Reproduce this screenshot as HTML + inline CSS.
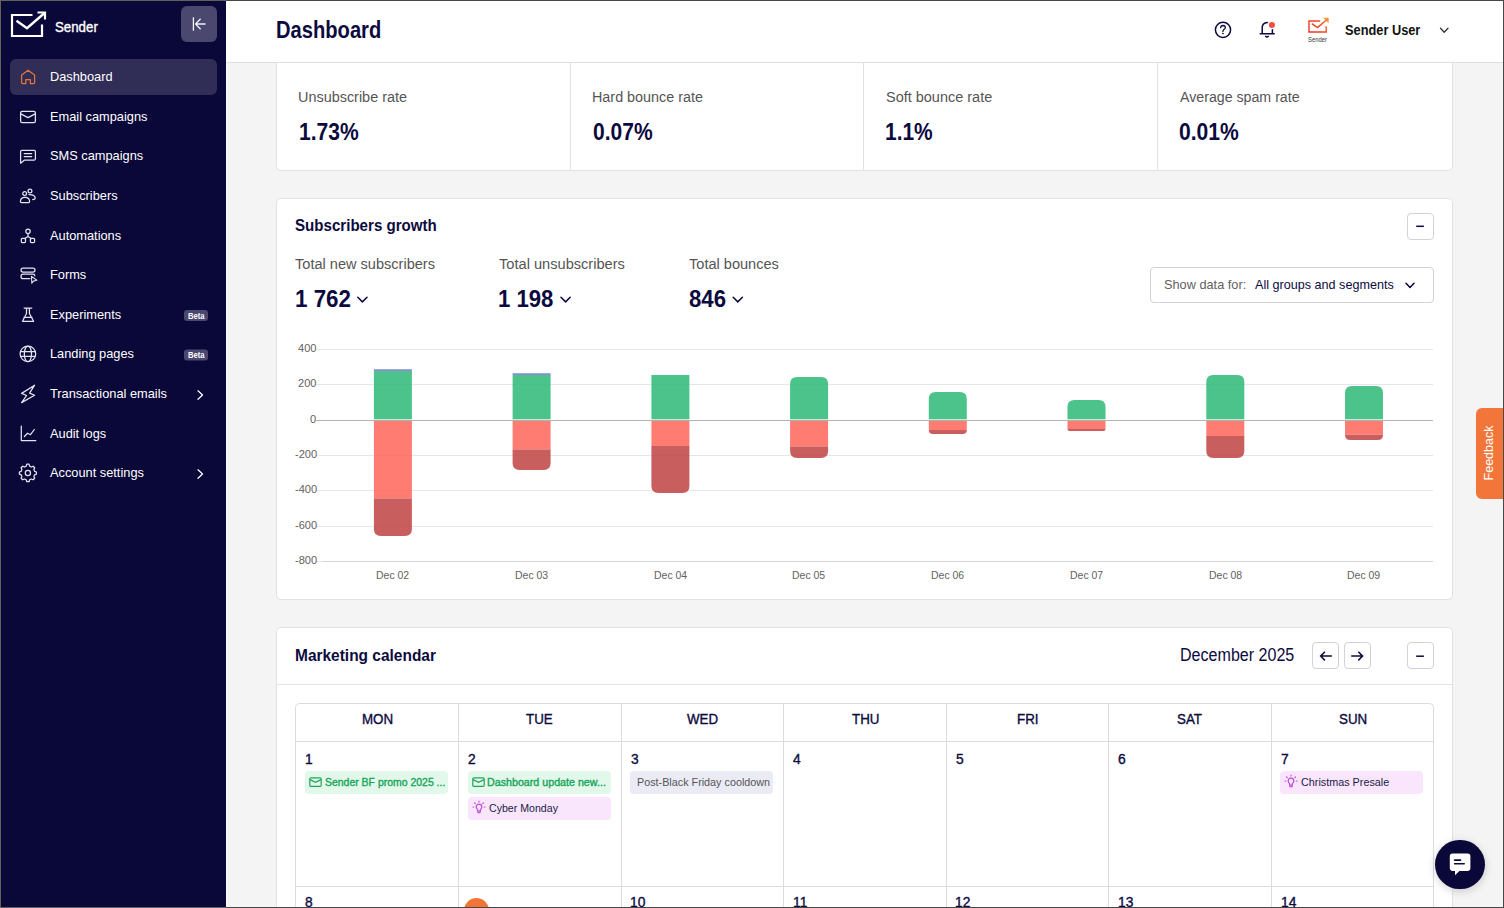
<!DOCTYPE html>
<html><head><meta charset="utf-8">
<style>
*{box-sizing:border-box;margin:0;padding:0}
html,body{width:1504px;height:908px;overflow:hidden;font-family:"Liberation Sans",sans-serif;background:#f4f4f4;position:relative}
.abs{position:absolute}
.t{position:absolute;white-space:nowrap;transform-origin:0 0}
.box{position:absolute;background:#fff;border:1px solid #e2e2e2}
.btn{position:absolute;border:1px solid #d3d3d3;border-radius:4px;background:#fff}
</style></head><body>

<div class="abs" style="left:0;top:0;width:226px;height:908px;background:#0a0838"></div>
<div class="abs" style="left:226px;top:62px;width:1px;height:846px;background:#fafafa"></div>
<svg class="abs" style="left:0;top:0" width="226" height="500" viewBox="0 0 226 500" fill="none" stroke="#fff">
    <path d="M32.5 15H12V36H42V24.5" stroke-width="2.2"/>
    <path d="M16.5 20.8L27 28.2L44.5 13" stroke-width="2.4"/>
    <path d="M37.5 12.5H45V19.5" stroke-width="2.2"/>
    <rect x="181" y="6" width="36" height="36" rx="6" fill="#4a486e" stroke="none"/>
    <path d="M193.4 17.3V30.8M195.6 24H205.5M200.6 18.8L195.6 24L200.6 29.2" stroke-width="1.3" stroke="#f2f2f7"/>
    <rect x="10" y="59" width="207" height="36" rx="6" fill="#302d57" stroke="none"/>
    <g stroke-width="1.25" stroke-linejoin="round" stroke-linecap="round" stroke="#e4e3ee">
    <path d="M21.6 75V82.4Q21.6 83.5 22.7 83.5H25.8V79.5H30.4V83.5H33.5Q34.6 83.5 34.6 82.4V75L28.1 70.3Z" stroke="#e8733a"/>
    <rect x="20.6" y="111.3" width="14.8" height="11.4" rx="1.6"/>
    <path d="M20.8 113.9L28 117.6L35.2 113.9"/>
    <path d="M20.6 163.2V151.6Q20.6 150.4 21.8 150.4H34.3Q35.4 150.4 35.4 151.6V158.8Q35.4 160 34.3 160H24.6Z"/>
    <path d="M24.2 153.6H31.7M24.2 156.5H31.7"/>
    <circle cx="24.7" cy="193.6" r="1.9"/>
    <path d="M20.4 201.5Q20.4 197.3 25 197.3Q29.6 197.3 29.6 201.5Q29.6 202.5 28.6 202.5H21.4Q20.4 202.5 20.4 201.5Z"/>
    <circle cx="30" cy="190.9" r="1.9"/>
    <path d="M29 194.6Q34.8 194.4 35.2 198Q35.2 199.5 32.6 199.5"/>
    <circle cx="28" cy="231.3" r="2.2"/>
    <path d="M28 233.5V236.4L24.8 238.6M28 236.4L31.2 238.6"/>
    <rect x="21.3" y="238.4" width="4.2" height="4.2" rx="1"/>
    <rect x="30.4" y="238.4" width="4.2" height="4.2" rx="1"/>
    <rect x="21" y="268" width="14" height="4.1" rx="2"/>
    <path d="M34.8 275.8Q34.8 274 33 274H23Q21 274 21 276.4Q21 278.7 23 278.7H29.8"/>
    <path d="M31.5 276.4L31.8 283.3L33.4 281.1L36.9 280.2Z" stroke-width="1.1"/>
    <path d="M24.1 308H31.8M26.5 308V313.5L22.5 321.3H33.6L29.4 313.5V308M23.9 317.3H32.1"/>
    <circle cx="27.9" cy="353.9" r="7.8"/>
    <ellipse cx="27.9" cy="353.9" rx="3.6" ry="7.8"/>
    <path d="M20.6 351.5H35.2M20.6 356.3H35.2"/>
    <path d="M34.6 385.2L21.6 393.4L26.6 395.5L21.6 402.6L34.6 395.3L29.6 393.1Z"/>
    <path d="M21.3 426V440.5H35.8M24.4 436.5L27.5 433.2L30.5 434.7L34.3 429.5"/>
    <path d="M26.8 465.2H29L29.6 467.1L31.3 468L33.1 467.2L34.7 468.8L33.9 470.6L34.6 472.3L36.4 473V475.2L34.6 475.8L33.9 477.5L34.7 479.2L33.1 480.8L31.3 480L29.6 480.8L29 482.7H26.8L26.2 480.8L24.5 480L22.7 480.8L21.1 479.2L21.9 477.5L21.2 475.8L19.4 475.2V473L21.2 472.3L21.9 470.6L21.1 468.8L22.7 467.2L24.5 468L26.2 467.1Z" transform="translate(0,-1)"/>
    <circle cx="27.9" cy="473" r="2.6"/>
    <path d="M198 390.8L202.5 395L198 399.3M198 469.8L202.5 474L198 478.3" stroke="#fff"/>
    </g>
    <rect x="184" y="310" width="24" height="11" rx="3" fill="#4a4870" stroke="none"/>
    <rect x="184" y="349.5" width="24" height="11" rx="3" fill="#4a4870" stroke="none"/>
</svg>
<div class="t" style="left:54.70px;top:21.00px;font-size:13.8px;line-height:13.8px;color:#fff;transform:scaleX(0.962);-webkit-text-stroke:0.35px #fff;">Sender</div>
<div class="t" style="left:50px;top:71.16px;font-size:12.8px;line-height:12.8px;color:#fff">Dashboard</div>
<div class="t" style="left:50px;top:110.76px;font-size:12.8px;line-height:12.8px;color:#fff">Email campaigns</div>
<div class="t" style="left:50px;top:150.36px;font-size:12.8px;line-height:12.8px;color:#fff">SMS campaigns</div>
<div class="t" style="left:50px;top:189.96px;font-size:12.8px;line-height:12.8px;color:#fff">Subscribers</div>
<div class="t" style="left:50px;top:229.56px;font-size:12.8px;line-height:12.8px;color:#fff">Automations</div>
<div class="t" style="left:50px;top:269.16px;font-size:12.8px;line-height:12.8px;color:#fff">Forms</div>
<div class="t" style="left:50px;top:308.76px;font-size:12.8px;line-height:12.8px;color:#fff">Experiments</div>
<div class="t" style="left:50px;top:348.36px;font-size:12.8px;line-height:12.8px;color:#fff">Landing pages</div>
<div class="t" style="left:50px;top:387.96px;font-size:12.8px;line-height:12.8px;color:#fff">Transactional emails</div>
<div class="t" style="left:50px;top:427.56px;font-size:12.8px;line-height:12.8px;color:#fff">Audit logs</div>
<div class="t" style="left:50px;top:467.16px;font-size:12.8px;line-height:12.8px;color:#fff">Account settings</div>
<div class="t" style="left:187.78px;top:313.00px;font-size:8.2px;line-height:8.2px;font-weight:bold;color:#fff;transform:scaleX(0.932);">Beta</div>
<div class="t" style="left:187.78px;top:352.00px;font-size:8.2px;line-height:8.2px;font-weight:bold;color:#fff;transform:scaleX(0.932);">Beta</div>
<div class="box" style="left:276px;top:40px;width:1177px;height:131px;border-radius:0 0 5px 5px"></div>
<div class="abs" style="left:570px;top:62px;width:1px;height:108px;background:#e2e2e2"></div>
<div class="abs" style="left:863px;top:62px;width:1px;height:108px;background:#e2e2e2"></div>
<div class="abs" style="left:1157px;top:62px;width:1px;height:108px;background:#e2e2e2"></div>
<div class="box" style="left:276px;top:198px;width:1177px;height:402px;border-radius:5px"></div>
<div class="box" style="left:276px;top:627px;width:1177px;height:400px;border-radius:5px"></div>
<div class="t" style="left:298.38px;top:90.00px;font-size:14.0px;line-height:14.0px;color:#555;transform:scaleX(1.030);">Unsubscribe rate</div>
<div class="t" style="left:298.99px;top:121.00px;font-size:23.0px;line-height:23.0px;font-weight:bold;color:#0c0a3e;transform:scaleX(0.915);">1.73%</div>
<div class="t" style="left:591.81px;top:90.00px;font-size:14.0px;line-height:14.0px;color:#555;transform:scaleX(1.026);">Hard bounce rate</div>
<div class="t" style="left:592.66px;top:121.00px;font-size:23.0px;line-height:23.0px;font-weight:bold;color:#0c0a3e;transform:scaleX(0.914);">0.07%</div>
<div class="t" style="left:885.65px;top:90.00px;font-size:14.0px;line-height:14.0px;color:#555;transform:scaleX(1.034);">Soft bounce rate</div>
<div class="t" style="left:885.49px;top:121.00px;font-size:23.0px;line-height:23.0px;font-weight:bold;color:#0c0a3e;transform:scaleX(0.909);">1.1%</div>
<div class="t" style="left:1179.76px;top:90.00px;font-size:14.0px;line-height:14.0px;color:#555;transform:scaleX(1.013);">Average spam rate</div>
<div class="t" style="left:1179.46px;top:121.00px;font-size:23.0px;line-height:23.0px;font-weight:bold;color:#0c0a3e;transform:scaleX(0.917);">0.01%</div>
<div class="t" style="left:295.35px;top:218.00px;font-size:15.8px;line-height:15.8px;font-weight:bold;color:#0c0a3e;transform:scaleX(0.956);">Subscribers growth</div>
<div class="btn" style="left:1407px;top:213px;width:27px;height:27px"></div>
<div class="t" style="left:295.47px;top:257.00px;font-size:14.0px;line-height:14.0px;color:#555;transform:scaleX(1.040);">Total new subscribers</div>
<div class="t" style="left:498.97px;top:257.00px;font-size:14.0px;line-height:14.0px;color:#555;transform:scaleX(1.044);">Total unsubscribers</div>
<div class="t" style="left:688.67px;top:257.00px;font-size:14.0px;line-height:14.0px;color:#555;transform:scaleX(1.040);">Total bounces</div>
<div class="t" style="left:295.10px;top:288.00px;font-size:23.0px;line-height:23.0px;font-weight:bold;color:#0c0a3e;transform:scaleX(0.973);">1 762</div>
<div class="t" style="left:498.12px;top:288.00px;font-size:23.0px;line-height:23.0px;font-weight:bold;color:#0c0a3e;transform:scaleX(0.963);">1 198</div>
<div class="t" style="left:688.78px;top:288.00px;font-size:23.0px;line-height:23.0px;font-weight:bold;color:#0c0a3e;transform:scaleX(0.965);">846</div>
<div class="btn" style="left:1150px;top:267px;width:284px;height:36px"></div>
<div class="t" style="left:1164.13px;top:280.00px;font-size:11.9px;line-height:11.9px;color:#5f5f5f;transform:scaleX(1.072);">Show data for:</div>
<div class="t" style="left:1255.17px;top:280.00px;font-size:11.9px;line-height:11.9px;color:#0c0a3e;transform:scaleX(1.060);">All groups and segments</div>
<svg class="abs" style="left:0;top:0" width="1504" height="400" fill="none" stroke="#0c0a3e" stroke-width="1.5" stroke-linecap="round" stroke-linejoin="round">
  <path d="M357.8 297.3L362.4 301.9L367 297.3M561 297.3L565.6 301.9L570.2 297.3M733.2 297.3L737.8 301.9L742.4 297.3M1406 283.2L1410 287.4L1414 283.2"/>
  <path d="M1416.2 226.3H1423.9" stroke-linecap="butt"/>
</svg>
<svg class="abs" style="left:0;top:0" width="1504" height="908" viewBox="0 0 1504 908">
<rect x="316" y="349" width="1117" height="1" fill="#e6e6e6"/>
<rect x="316" y="384" width="1117" height="1" fill="#e6e6e6"/>
<rect x="316" y="455" width="1117" height="1" fill="#e6e6e6"/>
<rect x="316" y="490" width="1117" height="1" fill="#e6e6e6"/>
<rect x="316" y="526" width="1117" height="1" fill="#e6e6e6"/>
<rect x="316" y="561" width="1117" height="1" fill="#e6e6e6"/>
<rect x="323" y="561" width="1110" height="1" fill="#d4d4d4"/>
<rect x="373.9" y="371" width="38" height="48" fill="#2cb875" fill-opacity="0.85"/>
<rect x="373.9" y="419" width="38" height="1" fill="#2cb875" fill-opacity="0.3"/>
<rect x="373.9" y="369.2" width="38" height="1.8" fill="#8a8ed6"/>
<rect x="373.9" y="421" width="38" height="77.5" fill="#ff655b" fill-opacity="0.85"/>
<path d="M373.9 498.5V529Q373.9 536 380.9 536H404.9Q411.9 536 411.9 529V498.5Z" fill="#bf4242" fill-opacity="0.85"/>
<rect x="512.6" y="375" width="38" height="44" fill="#2cb875" fill-opacity="0.85"/>
<rect x="512.6" y="419" width="38" height="1" fill="#2cb875" fill-opacity="0.3"/>
<rect x="512.6" y="373.2" width="38" height="1.8" fill="#8a8ed6"/>
<rect x="512.6" y="421" width="38" height="28.5" fill="#ff655b" fill-opacity="0.85"/>
<path d="M512.6 449.5V463Q512.6 470 519.6 470H543.6Q550.6 470 550.6 463V449.5Z" fill="#bf4242" fill-opacity="0.85"/>
<rect x="651.4" y="375" width="38" height="44" fill="#2cb875" fill-opacity="0.85"/>
<rect x="651.4" y="419" width="38" height="1" fill="#2cb875" fill-opacity="0.3"/>
<rect x="651.4" y="421" width="38" height="25" fill="#ff655b" fill-opacity="0.85"/>
<path d="M651.4 446V486Q651.4 493 658.4 493H682.4Q689.4 493 689.4 486V446Z" fill="#bf4242" fill-opacity="0.85"/>
<path d="M790.1 419V384Q790.1 377 797.1 377H821.1Q828.1 377 828.1 384V419Z" fill="#2cb875" fill-opacity="0.85"/>
<rect x="790.1" y="419" width="38" height="1" fill="#2cb875" fill-opacity="0.3"/>
<rect x="790.1" y="421" width="38" height="25.5" fill="#ff655b" fill-opacity="0.85"/>
<path d="M790.1 446.5V451Q790.1 458 797.1 458H821.1Q828.1 458 828.1 451V446.5Z" fill="#bf4242" fill-opacity="0.85"/>
<path d="M928.8 419V399Q928.8 392 935.8 392H959.8Q966.8 392 966.8 399V419Z" fill="#2cb875" fill-opacity="0.85"/>
<rect x="928.8" y="419" width="38" height="1" fill="#2cb875" fill-opacity="0.3"/>
<rect x="928.8" y="421" width="38" height="9" fill="#ff655b" fill-opacity="0.85"/>
<path d="M928.8 430V430Q928.8 434 932.8 434H962.8Q966.8 434 966.8 430V430Z" fill="#bf4242" fill-opacity="0.85"/>
<path d="M1067.5 419V407Q1067.5 400 1074.5 400H1098.5Q1105.5 400 1105.5 407V419Z" fill="#2cb875" fill-opacity="0.85"/>
<rect x="1067.5" y="419" width="38" height="1" fill="#2cb875" fill-opacity="0.3"/>
<rect x="1067.5" y="421" width="38" height="8" fill="#ff655b" fill-opacity="0.85"/>
<path d="M1067.5 429V429Q1067.5 431 1069.5 431H1103.5Q1105.5 431 1105.5 429V429Z" fill="#bf4242" fill-opacity="0.85"/>
<path d="M1206.3 419V382Q1206.3 375 1213.3 375H1237.3Q1244.3 375 1244.3 382V419Z" fill="#2cb875" fill-opacity="0.85"/>
<rect x="1206.3" y="419" width="38" height="1" fill="#2cb875" fill-opacity="0.3"/>
<rect x="1206.3" y="421" width="38" height="15" fill="#ff655b" fill-opacity="0.85"/>
<path d="M1206.3 436V451Q1206.3 458 1213.3 458H1237.3Q1244.3 458 1244.3 451V436Z" fill="#bf4242" fill-opacity="0.85"/>
<path d="M1345.0 419V393Q1345.0 386 1352.0 386H1376.0Q1383.0 386 1383.0 393V419Z" fill="#2cb875" fill-opacity="0.85"/>
<rect x="1345.0" y="419" width="38" height="1" fill="#2cb875" fill-opacity="0.3"/>
<rect x="1345.0" y="421" width="38" height="13.699999999999989" fill="#ff655b" fill-opacity="0.85"/>
<path d="M1345.0 434.7V434.7Q1345.0 440 1350.3 440H1377.7Q1383.0 440 1383.0 434.7V434.7Z" fill="#bf4242" fill-opacity="0.85"/>
<rect x="316" y="420" width="1117" height="1" fill="#b2b2b2"/>
</svg>
<div class="t" style="left:298.19px;top:343.00px;font-size:10.5px;line-height:10.5px;color:#616161;transform:scaleX(1.052);">400</div>
<div class="t" style="left:298.19px;top:378.00px;font-size:10.5px;line-height:10.5px;color:#616161;transform:scaleX(1.052);">200</div>
<div class="t" style="left:310.48px;top:414.00px;font-size:10.5px;line-height:10.5px;color:#616161;transform:scaleX(1.052);">0</div>
<div class="t" style="left:294.52px;top:449.00px;font-size:10.5px;line-height:10.5px;color:#616161;transform:scaleX(1.052);">-200</div>
<div class="t" style="left:294.52px;top:484.00px;font-size:10.5px;line-height:10.5px;color:#616161;transform:scaleX(1.052);">-400</div>
<div class="t" style="left:294.52px;top:520.00px;font-size:10.5px;line-height:10.5px;color:#616161;transform:scaleX(1.052);">-600</div>
<div class="t" style="left:294.52px;top:555.00px;font-size:10.5px;line-height:10.5px;color:#616161;transform:scaleX(1.052);">-800</div>
<div class="t" style="left:376.16px;top:571.00px;font-size:10.0px;line-height:10.0px;color:#616161;transform:scaleX(1.047);">Dec 02</div>
<div class="t" style="left:514.85px;top:571.00px;font-size:10.0px;line-height:10.0px;color:#616161;transform:scaleX(1.047);">Dec 03</div>
<div class="t" style="left:653.50px;top:571.00px;font-size:10.0px;line-height:10.0px;color:#616161;transform:scaleX(1.047);">Dec 04</div>
<div class="t" style="left:792.29px;top:571.00px;font-size:10.0px;line-height:10.0px;color:#616161;transform:scaleX(1.047);">Dec 05</div>
<div class="t" style="left:931.04px;top:571.00px;font-size:10.0px;line-height:10.0px;color:#616161;transform:scaleX(1.047);">Dec 06</div>
<div class="t" style="left:1069.81px;top:571.00px;font-size:10.0px;line-height:10.0px;color:#616161;transform:scaleX(1.047);">Dec 07</div>
<div class="t" style="left:1208.50px;top:571.00px;font-size:10.0px;line-height:10.0px;color:#616161;transform:scaleX(1.047);">Dec 08</div>
<div class="t" style="left:1347.24px;top:571.00px;font-size:10.0px;line-height:10.0px;color:#616161;transform:scaleX(1.047);">Dec 09</div>
<div class="abs" style="left:226px;top:0;width:1278px;height:62px;background:#fff"></div>
<div class="abs" style="left:226px;top:62px;width:1278px;height:1px;background:#e0e0e0"></div>
<div class="t" style="left:276.24px;top:19.00px;font-size:23.0px;line-height:23.0px;font-weight:bold;color:#0c0a3e;transform:scaleX(0.876);">Dashboard</div>
<svg class="abs" style="left:1200px;top:0" width="304" height="62" viewBox="1200 0 304 62" fill="none" stroke="#0c0a3e" stroke-width="1.5" stroke-linecap="round" stroke-linejoin="round">
    <circle cx="1223" cy="29.8" r="7.6"/>
    <path d="M1220.7 27.6Q1220.8 25.5 1223.1 25.5Q1225.3 25.6 1225.3 27.5Q1225.3 28.9 1223.7 29.7Q1222.9 30.3 1222.9 31.5" stroke-width="1.3"/>
    <circle cx="1222.9" cy="33.5" r="0.85" fill="#0c0a3e" stroke="none"/>
    <path d="M1262.2 33.4V27.6Q1262.2 22.8 1267.4 22.4M1272.4 28.6V33.4M1260.3 33.8H1274.2M1265.7 36.4Q1267 37.5 1268.3 36.4"/>
    <circle cx="1271.9" cy="25" r="3.7" fill="#fb4a3e" stroke="#fff" stroke-width="1.3"/>
    <defs><linearGradient id="lg" x1="1308" y1="33" x2="1328" y2="18" gradientUnits="userSpaceOnUse"><stop offset="0" stop-color="#ee2e24"/><stop offset="0.6" stop-color="#f04a28"/><stop offset="1" stop-color="#f78a2a"/></linearGradient></defs>
    <g stroke="url(#lg)" stroke-width="1.4" stroke-linecap="butt" stroke-linejoin="miter">
      <path d="M1320.2 21H1309V32H1326.2V26.3"/>
      <path d="M1311.8 23.7L1317.5 27.6L1326.8 19.6"/>
    </g>
    <path d="M1324.3 18.2H1328.2V22.1Z" fill="#f78a2a" stroke="#f78a2a" stroke-width="0.8"/>
    <path d="M1440.5 28.2L1444.2 32.2L1448 28.2" stroke="#333" stroke-width="1.3"/>
</svg>
<div class="t" style="left:1307.74px;top:37.00px;font-size:6.3px;line-height:6.3px;color:#333;transform:scaleX(0.928);">Sender</div>
<div class="t" style="left:1344.82px;top:24.00px;font-size:13.8px;line-height:13.8px;font-weight:bold;color:#111;transform:scaleX(0.927);">Sender User</div>
<div class="t" style="left:295.16px;top:648.00px;font-size:15.7px;line-height:15.7px;font-weight:bold;color:#0c0a3e;transform:scaleX(0.986);">Marketing calendar</div>
<div class="t" style="left:1179.88px;top:647.00px;font-size:17.5px;line-height:17.5px;color:#0c0a3e;transform:scaleX(0.918);">December 2025</div>
<div class="abs" style="left:277px;top:684px;width:1175px;height:1px;background:#e2e2e2"></div>
<div class="btn" style="left:1312px;top:642px;width:27px;height:27px"></div>
<div class="btn" style="left:1344px;top:642px;width:27px;height:27px"></div>
<div class="btn" style="left:1407px;top:642px;width:27px;height:27px"></div>
<svg class="abs" style="left:0;top:0" width="1504" height="908" fill="none" stroke="#0c0a3e" stroke-width="1.5" stroke-linecap="round" stroke-linejoin="round">
<path d="M1320.6 656.1H1331.8M1324.9 651.8L1320.6 656.1L1324.9 660.4" stroke-linecap="butt" stroke-linejoin="miter"/>
<path d="M1362.6 656.1H1351.2M1358.3 651.8L1362.6 656.1L1358.3 660.4" stroke-linecap="butt" stroke-linejoin="miter"/>
<path d="M1416.2 656.2H1423.9" stroke-linecap="butt"/>
<rect x="295.5" y="703.5" width="1138" height="240" rx="4" stroke="#dcdcdc" stroke-width="1"/>
<path d="M295.5 741.5H1433.5M295.5 886.5H1433.5" stroke="#dcdcdc" stroke-width="1"/>
<path d="M458.5 703.5V908" stroke="#dcdcdc" stroke-width="1"/>
<path d="M621.5 703.5V908" stroke="#dcdcdc" stroke-width="1"/>
<path d="M783.5 703.5V908" stroke="#dcdcdc" stroke-width="1"/>
<path d="M946.5 703.5V908" stroke="#dcdcdc" stroke-width="1"/>
<path d="M1108.5 703.5V908" stroke="#dcdcdc" stroke-width="1"/>
<path d="M1271.5 703.5V908" stroke="#dcdcdc" stroke-width="1"/>
</svg>
<div class="t" style="left:361.53px;top:713.00px;font-size:13.8px;line-height:13.8px;color:#0c0a3e;transform:scaleX(0.967);-webkit-text-stroke:0.35px #0c0a3e;">MON</div>
<div class="t" style="left:526.48px;top:713.00px;font-size:13.8px;line-height:13.8px;color:#0c0a3e;transform:scaleX(0.967);-webkit-text-stroke:0.35px #0c0a3e;">TUE</div>
<div class="t" style="left:687.00px;top:713.00px;font-size:13.8px;line-height:13.8px;color:#0c0a3e;transform:scaleX(0.967);-webkit-text-stroke:0.35px #0c0a3e;">WED</div>
<div class="t" style="left:851.52px;top:713.00px;font-size:13.8px;line-height:13.8px;color:#0c0a3e;transform:scaleX(0.967);-webkit-text-stroke:0.35px #0c0a3e;">THU</div>
<div class="t" style="left:1016.78px;top:713.00px;font-size:13.8px;line-height:13.8px;color:#0c0a3e;transform:scaleX(0.967);-webkit-text-stroke:0.35px #0c0a3e;">FRI</div>
<div class="t" style="left:1177.42px;top:713.00px;font-size:13.8px;line-height:13.8px;color:#0c0a3e;transform:scaleX(0.967);-webkit-text-stroke:0.35px #0c0a3e;">SAT</div>
<div class="t" style="left:1338.79px;top:713.00px;font-size:13.8px;line-height:13.8px;color:#0c0a3e;transform:scaleX(0.967);-webkit-text-stroke:0.35px #0c0a3e;">SUN</div>
<div class="t" style="left:304.96px;top:753.00px;font-size:13.8px;line-height:13.8px;color:#0c0a3e;transform:scaleX(1.001);-webkit-text-stroke:0.35px #0c0a3e;">1</div>
<div class="t" style="left:305.41px;top:896.00px;font-size:13.8px;line-height:13.8px;color:#0c0a3e;transform:scaleX(1.001);-webkit-text-stroke:0.35px #0c0a3e;">8</div>
<div class="t" style="left:467.90px;top:753.00px;font-size:13.8px;line-height:13.8px;color:#0c0a3e;transform:scaleX(1.001);-webkit-text-stroke:0.35px #0c0a3e;">2</div>
<div class="t" style="left:630.66px;top:753.00px;font-size:13.8px;line-height:13.8px;color:#0c0a3e;transform:scaleX(1.001);-webkit-text-stroke:0.35px #0c0a3e;">3</div>
<div class="t" style="left:630.14px;top:896.00px;font-size:13.8px;line-height:13.8px;color:#0c0a3e;transform:scaleX(1.001);-webkit-text-stroke:0.35px #0c0a3e;">10</div>
<div class="t" style="left:793.46px;top:753.00px;font-size:13.8px;line-height:13.8px;color:#0c0a3e;transform:scaleX(1.001);-webkit-text-stroke:0.35px #0c0a3e;">4</div>
<div class="t" style="left:792.73px;top:896.00px;font-size:13.8px;line-height:13.8px;color:#0c0a3e;transform:scaleX(1.001);-webkit-text-stroke:0.35px #0c0a3e;">11</div>
<div class="t" style="left:955.81px;top:753.00px;font-size:13.8px;line-height:13.8px;color:#0c0a3e;transform:scaleX(1.001);-webkit-text-stroke:0.35px #0c0a3e;">5</div>
<div class="t" style="left:955.32px;top:896.00px;font-size:13.8px;line-height:13.8px;color:#0c0a3e;transform:scaleX(1.001);-webkit-text-stroke:0.35px #0c0a3e;">12</div>
<div class="t" style="left:1118.26px;top:753.00px;font-size:13.8px;line-height:13.8px;color:#0c0a3e;transform:scaleX(1.001);-webkit-text-stroke:0.35px #0c0a3e;">6</div>
<div class="t" style="left:1117.91px;top:896.00px;font-size:13.8px;line-height:13.8px;color:#0c0a3e;transform:scaleX(1.001);-webkit-text-stroke:0.35px #0c0a3e;">13</div>
<div class="t" style="left:1280.82px;top:753.00px;font-size:13.8px;line-height:13.8px;color:#0c0a3e;transform:scaleX(1.001);-webkit-text-stroke:0.35px #0c0a3e;">7</div>
<div class="t" style="left:1280.50px;top:896.00px;font-size:13.8px;line-height:13.8px;color:#0c0a3e;transform:scaleX(1.001);-webkit-text-stroke:0.35px #0c0a3e;">14</div>
<div class="abs" style="left:463.5px;top:897.8px;width:25.2px;height:25.2px;border-radius:50%;background:#f27537"></div>
<div class="abs" style="left:305px;top:771px;width:142.7px;height:22.6px;border-radius:4px;background:#e2f8ea"></div>
<div class="abs" style="left:468px;top:771px;width:142.7px;height:22.6px;border-radius:4px;background:#e2f8ea"></div>
<div class="abs" style="left:468px;top:797px;width:142.7px;height:22.6px;border-radius:4px;background:#f9e6fc"></div>
<div class="abs" style="left:630px;top:771px;width:142.7px;height:22.6px;border-radius:4px;background:#ebebf6"></div>
<div class="abs" style="left:1280.3px;top:771px;width:142.7px;height:22.6px;border-radius:4px;background:#f9e6fc"></div>
<svg class="abs" style="left:309px;top:777px" width="14" height="11" viewBox="0 0 14 11" fill="none" stroke="#22a35d" stroke-width="1.2"><rect x="0.8" y="0.8" width="11.4" height="8.6" rx="1.2"/><path d="M1 2.6L6.5 5.4L12 2.6"/></svg>
<svg class="abs" style="left:472px;top:777px" width="14" height="11" viewBox="0 0 14 11" fill="none" stroke="#22a35d" stroke-width="1.2"><rect x="0.8" y="0.8" width="11.4" height="8.6" rx="1.2"/><path d="M1 2.6L6.5 5.4L12 2.6"/></svg>
<svg class="abs" style="left:472px;top:800px" width="14" height="15" viewBox="0 0 14 15" fill="none" stroke="#c04ed6" stroke-width="1.2" stroke-linecap="round"><path d="M7 4.2Q9.8 4.2 9.8 7Q9.8 8.6 8.4 9.6V11.2H5.6V9.6Q4.2 8.6 4.2 7Q4.2 4.2 7 4.2ZM5.8 12.6H8.2"/><path d="M7 1.2V2M2.6 3L3.2 3.6M11.4 3L10.8 3.6M1 7H1.8M12.2 7H13"/></svg>
<svg class="abs" style="left:1284px;top:774px" width="14" height="15" viewBox="0 0 14 15" fill="none" stroke="#c04ed6" stroke-width="1.2" stroke-linecap="round"><path d="M7 4.2Q9.8 4.2 9.8 7Q9.8 8.6 8.4 9.6V11.2H5.6V9.6Q4.2 8.6 4.2 7Q4.2 4.2 7 4.2ZM5.8 12.6H8.2"/><path d="M7 1.2V2M2.6 3L3.2 3.6M11.4 3L10.8 3.6M1 7H1.8M12.2 7H13"/></svg>
<div class="t" style="left:324.73px;top:777.00px;font-size:10.6px;line-height:10.6px;color:#13a557;transform:scaleX(0.987);-webkit-text-stroke:0.35px #13a557;">Sender BF promo 2025 ...</div>
<div class="t" style="left:487.12px;top:777.00px;font-size:10.6px;line-height:10.6px;color:#13a557;transform:scaleX(1.009);-webkit-text-stroke:0.35px #13a557;">Dashboard update new...</div>
<div class="t" style="left:489.37px;top:804.00px;font-size:10.0px;line-height:10.0px;color:#1c1a48;transform:scaleX(1.060);">Cyber Monday</div>
<div class="t" style="left:636.61px;top:777.00px;font-size:10.6px;line-height:10.6px;color:#555;transform:scaleX(1.018);">Post-Black Friday cooldown</div>
<div class="t" style="left:1301.26px;top:777.00px;font-size:10.6px;line-height:10.6px;color:#1c1a48;transform:scaleX(1.019);">Christmas Presale</div>
<div class="abs" style="left:1475.5px;top:407.5px;width:28px;height:91px;background:#f27539;border-radius:6px 0 0 6px"></div>
<div class="abs" style="left:1489px;top:453px;width:0;height:0;transform:rotate(-90deg)"><div style="position:absolute;left:-28px;top:-8px;width:56px;height:16px;line-height:16px;text-align:center;color:#fff;font-size:12.5px">Feedback</div></div>
<div class="abs" style="left:1435.2px;top:839.7px;width:49.4px;height:49.4px;border-radius:50%;background:#0a0838;box-shadow:0 2px 8px rgba(0,0,0,0.18)"></div>
<svg class="abs" style="left:1440px;top:845px" width="40" height="40" viewBox="1440 845 40 40">
  <path d="M1452.6 853.4H1467.6Q1470.4 853.4 1470.4 856.2V868.1Q1470.4 870.9 1467.6 870.9H1459.4L1455 875.2V870.9H1452.6Q1449.8 870.9 1449.8 868.1V856.2Q1449.8 853.4 1452.6 853.4Z" fill="#fff"/>
  <path d="M1454.6 860.1H1460.6M1454.6 863.8H1464.2" stroke="#0a0838" stroke-width="1.6" stroke-linecap="round"/>
</svg>
<div class="abs" style="left:0;top:0;width:226px;height:1px;background:#62625b;z-index:50"></div>
<div class="abs" style="left:226px;top:0;width:1278px;height:1px;background:#474747;z-index:50"></div>
<div class="abs" style="left:0;top:907px;width:226px;height:1px;background:#62625b;z-index:50"></div>
<div class="abs" style="left:226px;top:907px;width:1278px;height:1px;background:#474747;z-index:50"></div>
<div class="abs" style="left:0;top:0;width:1px;height:908px;background:#62625b;z-index:50"></div>
<div class="abs" style="left:1503px;top:0;width:1px;height:908px;background:#474747;z-index:50"></div>
</body></html>
